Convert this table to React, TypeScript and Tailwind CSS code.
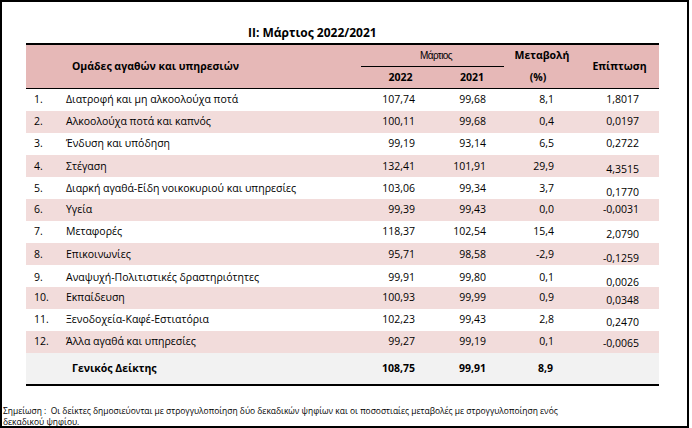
const rows = [
  { n: "1.", label: "Διατροφή και μη αλκοολούχα ποτά", a: "107,74", b: "99,68", c: "8,1", d: "1,8017", off: "pt-0" },
  { n: "2.", label: "Αλκοολούχα ποτά και καπνός", a: "100,11", b: "99,68", c: "0,4", d: "0,0197", off: "pt-0" },
  { n: "3.", label: "Ένδυση και υπόδηση", a: "99,19", b: "93,14", c: "6,5", d: "0,2722", off: "pt-0" },
  { n: "4.", label: "Στέγαση", a: "132,41", b: "101,91", c: "29,9", d: "4,3515", off: "pt-[7px]" },
  { n: "5.", label: "Διαρκή αγαθά-Είδη νοικοκυριού και υπηρεσίες", a: "103,06", b: "99,34", c: "3,7", d: "0,1770", off: "pt-[8px]" },
  { n: "6.", label: "Υγεία", a: "99,39", b: "99,43", c: "0,0", d: "-0,0031", off: "pt-0" },
  { n: "7.", label: "Μεταφορές", a: "118,37", b: "102,54", c: "15,4", d: "2,0790", off: "pt-[6px]" },
  { n: "8.", label: "Επικοινωνίες", a: "95,71", b: "98,58", c: "-2,9", d: "-0,1259", off: "pt-[8px]" },
  { n: "9.", label: "Αναψυχή-Πολιτιστικές δραστηριότητες", a: "99,91", b: "99,80", c: "0,1", d: "0,0026", off: "pt-[10px]" },
  { n: "10.", label: "Εκπαίδευση", a: "100,93", b: "99,99", c: "0,9", d: "0,0348", off: "pt-[6px]" },
  { n: "11.", label: "Ξενοδοχεία-Καφέ-Εστιατόρια", a: "102,23", b: "99,43", c: "2,8", d: "0,2470", off: "pt-[6px]" },
  { n: "12.", label: "Άλλα αγαθά και υπηρεσίες", a: "99,27", b: "99,19", c: "0,1", d: "-0,0065", off: "pt-[4px]" },
];

const cols = "grid grid-cols-[40px_295px_71px_72px_76px_79px]";

export default function App() {
  return (
    <div className="w-[692px] h-[428px] bg-white overflow-hidden text-black" style={{ fontFamily: '"Open Sans", "Noto Sans", sans-serif' }}>
      <div className="w-[689px] h-[428px] border-2 border-black box-border overflow-hidden">
        <div className="pt-[23px] pl-[246px] text-[12px] leading-4 font-bold">II: Μάρτιος 2022/2021</div>

        <div className="ml-[24px] mt-[2px] w-[633px] border-t-2 border-b-2 border-black">
          {/* header */}
          <div className={`${cols} grid-rows-[22px_21px] bg-[#e6b8b7] border-b border-black font-bold text-[10.5px]`}>
            <div className="row-span-2" />
            <div className="row-span-2 flex items-center pl-[6px]">Ομάδες αγαθών και υπηρεσιών</div>
            <div className="col-span-2 flex items-end justify-center pl-[7px] pb-[3px] border-b-[1.5px] border-black">
              <span className="text-[10px] font-normal tracking-[-0.6px]" style={{ fontFamily: '"Liberation Sans Narrow", "Liberation Sans", sans-serif' }}>Μάρτιος</span>
            </div>
            <div className="flex items-end justify-center pb-[3px]">Μεταβολή</div>
            <div className="row-span-2 flex items-center justify-center">Επίπτωση</div>
            <div className="flex items-center justify-center pl-[8px]">2022</div>
            <div className="flex items-center justify-center pl-[8px]">2021</div>
            <div className="flex items-center justify-center pr-[8px]">(%)</div>
          </div>

          {/* body */}
          {rows.map((r, i) => (
            <div key={r.n} className={`${cols} h-[22px] text-[10.5px] ${i % 2 === 1 ? "bg-[#f2dcdb]" : "bg-white"}`}>
              <div className="flex items-center pl-[8px]">{r.n}</div>
              <div className="flex items-center whitespace-nowrap">{r.label}</div>
              <div className="flex items-center justify-end pr-[17px]">{r.a}</div>
              <div className="flex items-center justify-end pr-[18px]">{r.b}</div>
              <div className="flex items-center justify-end pr-[26px]">{r.c}</div>
              <div className={`flex items-center justify-end pr-[20px] ${r.off}`}>{r.d}</div>
            </div>
          ))}

          {/* total */}
          <div className={`${cols} h-[31px] bg-[#f2f2f2] font-bold text-[10.5px]`}>
            <div />
            <div className="flex items-center pl-[6px]">Γενικός Δείκτης</div>
            <div className="flex items-center justify-end pr-[17px]">108,75</div>
            <div className="flex items-center justify-end pr-[18px]">99,91</div>
            <div className="flex items-center justify-end pr-[27px]">8,9</div>
            <div />
          </div>
        </div>

        <p className="mt-[19px] pl-[1px] text-[8.45px] leading-[11px] whitespace-nowrap">
          Σημείωση :&nbsp; Οι δείκτες δημοσιεύονται με στρογγυλοποίηση δύο δεκαδικών ψηφίων και οι ποσοστιαίες μεταβολές με στρογγυλοποίηση ενός
          <br />
          δεκαδικού ψηφίου.
        </p>
      </div>
    </div>
  );
}
